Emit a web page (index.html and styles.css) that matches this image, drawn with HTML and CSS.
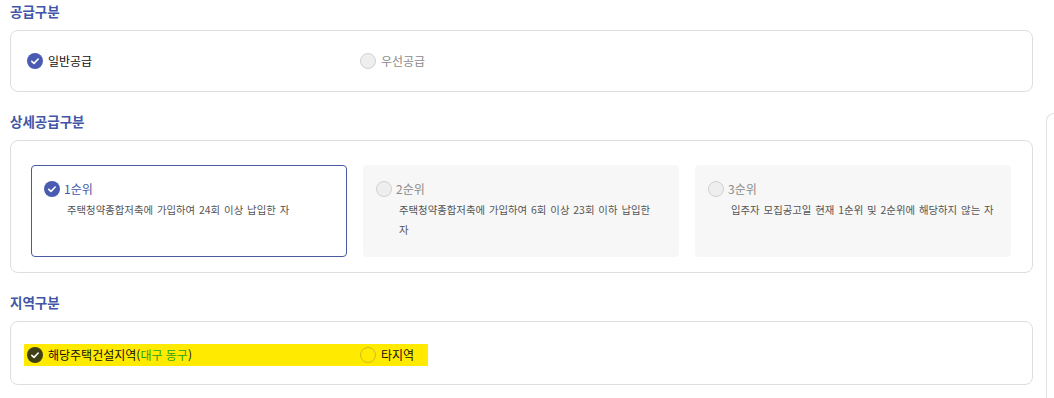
FILE: index.html
```html
<!DOCTYPE html>
<html lang="ko">
<head>
<meta charset="utf-8">
<title>공급구분</title>
<link rel="stylesheet" href="styles.css">
</head>
<body>
<div class="page">
  <main class="main">
    <section class="section">
      <h2 class="title">공급구분</h2>
      <div class="box box-supply">
        <div class="row">
          <label class="opt opt-first">
            <svg class="ico" viewBox="0 0 16 16"><circle cx="8" cy="8" r="8" fill="#4a5cb2"/><polyline points="4.8,8.3 7,10.4 11.2,6" fill="none" stroke="#fff" stroke-width="1.6" stroke-linecap="round" stroke-linejoin="round"/></svg>
            <span class="lbl">일반공급</span>
          </label>
          <label class="opt">
            <svg class="ico" viewBox="0 0 16 16"><circle cx="8" cy="8" r="7.5" fill="#eeeeee" stroke="#d0d0d0" stroke-width="1"/></svg>
            <span class="lbl lbl-off">우선공급</span>
          </label>
        </div>
      </div>
    </section>

    <section class="section">
      <h2 class="title">상세공급구분</h2>
      <div class="box box-detail">
        <div class="card card-on">
          <div class="card-head">
            <svg class="ico" viewBox="0 0 16 16"><circle cx="8" cy="8" r="8" fill="#4a5cb2"/><polyline points="4.8,8.3 7,10.4 11.2,6" fill="none" stroke="#fff" stroke-width="1.6" stroke-linecap="round" stroke-linejoin="round"/></svg>
            <span class="card-lbl">1순위</span>
          </div>
          <p class="desc">주택청약종합저축에 가입하여 24회 이상 납입한 자</p>
        </div>
        <div class="card">
          <div class="card-head">
            <svg class="ico" viewBox="0 0 16 16"><circle cx="8" cy="8" r="7.5" fill="#eeeeee" stroke="#d0d0d0" stroke-width="1"/></svg>
            <span class="card-lbl lbl-off">2순위</span>
          </div>
          <p class="desc">주택청약종합저축에 가입하여 6회 이상 23회 이하 납입한<br>자</p>
        </div>
        <div class="card">
          <div class="card-head">
            <svg class="ico" viewBox="0 0 16 16"><circle cx="8" cy="8" r="7.5" fill="#eeeeee" stroke="#d0d0d0" stroke-width="1"/></svg>
            <span class="card-lbl lbl-off">3순위</span>
          </div>
          <p class="desc">입주자 모집공고일 현재 1순위 및 2순위에 해당하지 않는 자</p>
        </div>
      </div>
    </section>

    <section class="section">
      <h2 class="title">지역구분</h2>
      <div class="box box-region">
        <div class="row row-mark">
          <label class="opt opt-first">
            <svg class="ico" viewBox="0 0 16 16"><circle cx="8" cy="8" r="8" fill="#3d3f14"/><polyline points="4.8,8.3 7,10.4 11.2,6" fill="none" stroke="#fff" stroke-width="1.6" stroke-linecap="round" stroke-linejoin="round"/></svg>
            <span class="lbl">해당주택건설지역(<span class="area">대구 동구</span>)</span>
          </label>
          <label class="opt">
            <svg class="ico" viewBox="0 0 16 16"><circle cx="8" cy="8" r="7.5" fill="none" stroke="#cdbd1c" stroke-width="1"/></svg>
            <span class="lbl">타지역</span>
          </label>
        </div>
      </div>
    </section>
  </main>
  <aside class="side"></aside>
</div>
</body>
</html>
```

FILE: styles.css
```css
html, body {
  margin: 0;
  padding: 0;
  background: #ffffff;
}

body {
  font-family: "Noto Sans CJK KR", "Noto Sans", sans-serif;
  color: #222222;
  overflow: hidden;
  height: 398px;
}

.page {
  display: flex;
  gap: 13px;
  padding-left: 10px;
  height: 398px;
}

.main {
  width: 1023px;
  flex: none;
  display: flex;
  flex-direction: column;
  gap: 19px;
  padding-top: 1px;
}

.title {
  margin: 0 0 9px 0;
  font-size: 13.5px;
  line-height: 20px;
  font-weight: 700;
  color: #4156a6;
}

.box {
  border: 1px solid #dedede;
  border-radius: 8px;
  background: #ffffff;
}

.box-supply {
  padding: 20px 13px;
}

.box-region {
  padding: 22px 13px 18px;
}

.row {
  display: flex;
  width: fit-content;
  align-items: center;
  height: 20px;
  padding: 0 14px 0 3px;
}

.row-mark {
  height: 22px;
  background: #ffea00;
}

.opt {
  display: flex;
  align-items: center;
  gap: 5px;
}

.opt-first {
  width: 333px;
}

.ico {
  width: 16px;
  height: 16px;
  flex: none;
}

.lbl {
  font-size: 12px;
  line-height: 20px;
  color: #111111;
}

.lbl-off {
  color: #8a8a8a;
}

.area {
  color: #1fa51f;
}

.box-detail {
  display: grid;
  grid-template-columns: repeat(3, 316px);
  column-gap: 16px;
  padding: 24px 21px 15px 20px;
}

.card {
  height: 92px;
  box-sizing: border-box;
  padding: 13px 8px 0 12px;
  background: #f7f7f7;
  border: 1px solid #f7f7f7;
  border-radius: 4px;
}

.card-on {
  background: #ffffff;
  border-color: #4a5a9e;
}

.card-head {
  display: flex;
  align-items: center;
  gap: 4px;
  height: 20px;
}

.card-lbl {
  font-size: 12px;
  line-height: 20px;
  color: #4156a6;
}

.card-lbl.lbl-off {
  color: #8a8a8a;
}

.desc {
  margin: 1px 0 0 0;
  padding-left: 23px;
  font-size: 10.4px;
  word-spacing: 1px;
  line-height: 20px;
  color: #555555;
}

.side {
  flex: 1;
  margin-top: 113px;
  border-top: 1px solid #e2e2e2;
  border-left: 1px solid #e2e2e2;
  border-top-left-radius: 9px;
}
```
